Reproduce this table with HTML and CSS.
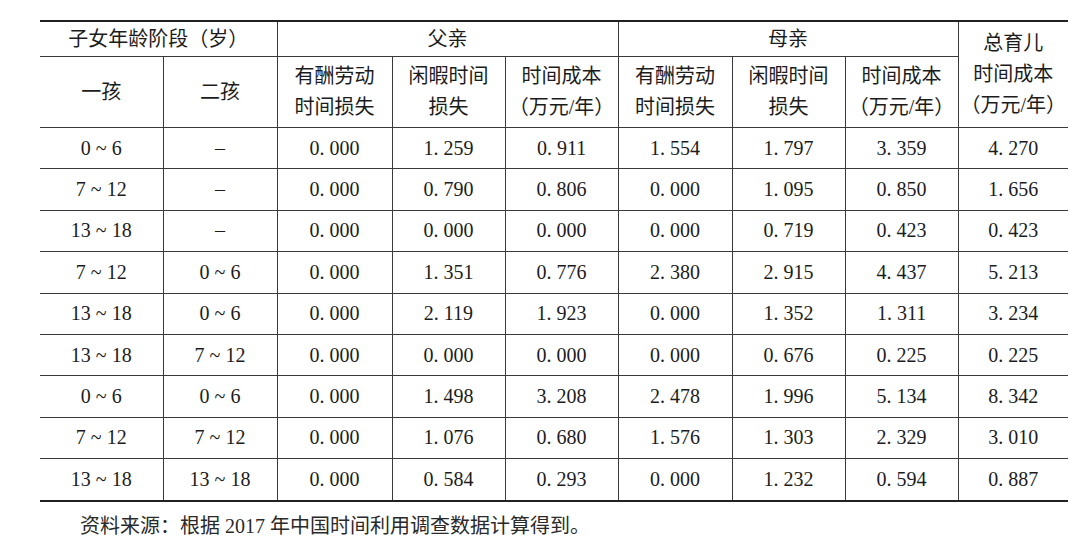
FILE: index.html
```html
<!DOCTYPE html>
<html lang="zh">
<head>
<meta charset="utf-8">
<link rel="stylesheet" href="styles.css">
</head>
<body>
<div class="page">
<table class="data">
<colgroup>
<col class="c1"><col class="c2"><col class="c3"><col class="c4"><col class="c5"><col class="c6"><col class="c7"><col class="c8"><col class="c9">
</colgroup>
<thead>
<tr class="h1">
<th colspan="2" class="first">子女年龄阶段（岁）</th>
<th colspan="3">父亲</th>
<th colspan="3">母亲</th>
<th rowspan="2" class="total">总育儿<br>时间成本<br>（万元/年）</th>
</tr>
<tr class="h2">
<th class="first">一孩</th>
<th>二孩</th>
<th>有酬劳动<br>时间损失</th>
<th>闲暇时间<br>损失</th>
<th>时间成本<br>（万元/年）</th>
<th>有酬劳动<br>时间损失</th>
<th>闲暇时间<br>损失</th>
<th>时间成本<br>（万元/年）</th>
</tr>
</thead>
<tbody>
<tr><td class="first">0 ~ 6</td><td>–</td><td>0. 000</td><td>1. 259</td><td>0. 911</td><td>1. 554</td><td>1. 797</td><td>3. 359</td><td>4. 270</td></tr>
<tr><td class="first">7 ~ 12</td><td>–</td><td>0. 000</td><td>0. 790</td><td>0. 806</td><td>0. 000</td><td>1. 095</td><td>0. 850</td><td>1. 656</td></tr>
<tr><td class="first">13 ~ 18</td><td>–</td><td>0. 000</td><td>0. 000</td><td>0. 000</td><td>0. 000</td><td>0. 719</td><td>0. 423</td><td>0. 423</td></tr>
<tr><td class="first">7 ~ 12</td><td>0 ~ 6</td><td>0. 000</td><td>1. 351</td><td>0. 776</td><td>2. 380</td><td>2. 915</td><td>4. 437</td><td>5. 213</td></tr>
<tr><td class="first">13 ~ 18</td><td>0 ~ 6</td><td>0. 000</td><td>2. 119</td><td>1. 923</td><td>0. 000</td><td>1. 352</td><td>1. 311</td><td>3. 234</td></tr>
<tr><td class="first">13 ~ 18</td><td>7 ~ 12</td><td>0. 000</td><td>0. 000</td><td>0. 000</td><td>0. 000</td><td>0. 676</td><td>0. 225</td><td>0. 225</td></tr>
<tr><td class="first">0 ~ 6</td><td>0 ~ 6</td><td>0. 000</td><td>1. 498</td><td>3. 208</td><td>2. 478</td><td>1. 996</td><td>5. 134</td><td>8. 342</td></tr>
<tr><td class="first">7 ~ 12</td><td>7 ~ 12</td><td>0. 000</td><td>1. 076</td><td>0. 680</td><td>1. 576</td><td>1. 303</td><td>2. 329</td><td>3. 010</td></tr>
<tr><td class="first">13 ~ 18</td><td>13 ~ 18</td><td>0. 000</td><td>0. 584</td><td>0. 293</td><td>0. 000</td><td>1. 232</td><td>0. 594</td><td>0. 887</td></tr>
</tbody>
</table>
<p class="note">资料来源：根据 2017 年中国时间利用调查数据计算得到。</p>
</div>
</body>
</html>
```

FILE: styles.css
```css
html, body {
  margin: 0;
  padding: 0;
  background: #ffffff;
}

body {
  font-family: "Liberation Serif", "Noto Sans CJK SC", serif;
  color: #1c1c1c;
  font-size: 20px;
}

.page {
  padding: 20px 0 0 40px;
}

.data {
  width: 1028px;
  table-layout: fixed;
  border-collapse: collapse;
  border-top: 2px solid #222;
  border-bottom: 2px solid #222;
}

.c1 { width: 123px; }
.c2 { width: 114px; }
.c3 { width: 115px; }
.c4 { width: 113px; }
.c5 { width: 113px; }
.c6 { width: 114px; }
.c7 { width: 113px; }
.c8 { width: 113px; }
.c9 { width: 110px; }

.data th,
.data td {
  padding: 0;
  text-align: center;
  vertical-align: middle;
  font-weight: normal;
  border-left: 1px solid #3a3a3a;
  border-bottom: 1px solid #3a3a3a;
  line-height: 31px;
}

.data .first {
  border-left: none;
}

.data tbody tr:last-child td {
  border-bottom: 2px solid #222;
}

.h1 th {
  height: 34px;
}

.h2 th {
  height: 70px;
}

.data th.total {
  line-height: 31px;
}

.data tbody td {
  height: 40.4px;
}

.note {
  margin: 11px 0 0 40px;
  font-size: 20px;
  line-height: 26px;
  color: #2a2a2a;
}
```
